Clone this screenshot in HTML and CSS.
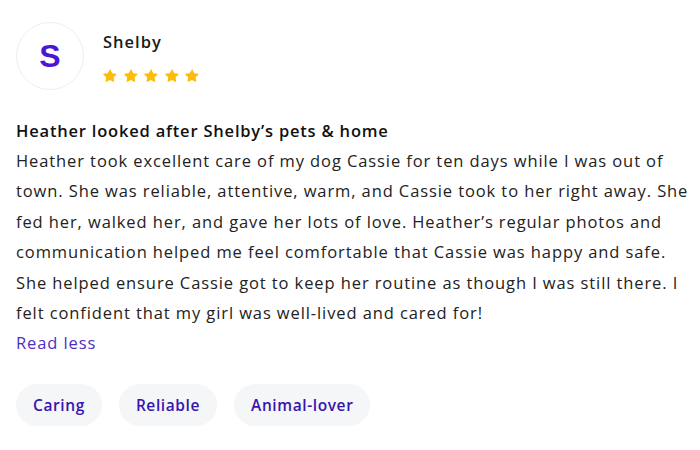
FILE: index.html
```html
<!DOCTYPE html>
<html>
<head>
<meta charset="utf-8">
<link rel="stylesheet" href="styles.css">
</head>
<body>
<div class="review">
  <div class="header">
    <div class="avatar">S</div>
    <div class="who">
      <div class="name">Shelby</div>
      <div class="stars">
        <svg viewBox="0 0 24 24"><path d="M12 2.6l2.7 5.6 6.1.8c.8.1 1.1 1.1.5 1.6l-4.4 4.3 1 6.1c.1.8-.7 1.4-1.4 1l-5.5-2.9-5.5 2.9c-.7.4-1.5-.2-1.4-1l1-6.1-4.4-4.3c-.6-.5-.3-1.5.5-1.6l6.1-.8L10.9 2.6c.3-.7 1.3-.7 1.6 0z"/></svg>
        <svg viewBox="0 0 24 24"><path d="M12 2.6l2.7 5.6 6.1.8c.8.1 1.1 1.1.5 1.6l-4.4 4.3 1 6.1c.1.8-.7 1.4-1.4 1l-5.5-2.9-5.5 2.9c-.7.4-1.5-.2-1.4-1l1-6.1-4.4-4.3c-.6-.5-.3-1.5.5-1.6l6.1-.8L10.9 2.6c.3-.7 1.3-.7 1.6 0z"/></svg>
        <svg viewBox="0 0 24 24"><path d="M12 2.6l2.7 5.6 6.1.8c.8.1 1.1 1.1.5 1.6l-4.4 4.3 1 6.1c.1.8-.7 1.4-1.4 1l-5.5-2.9-5.5 2.9c-.7.4-1.5-.2-1.4-1l1-6.1-4.4-4.3c-.6-.5-.3-1.5.5-1.6l6.1-.8L10.9 2.6c.3-.7 1.3-.7 1.6 0z"/></svg>
        <svg viewBox="0 0 24 24"><path d="M12 2.6l2.7 5.6 6.1.8c.8.1 1.1 1.1.5 1.6l-4.4 4.3 1 6.1c.1.8-.7 1.4-1.4 1l-5.5-2.9-5.5 2.9c-.7.4-1.5-.2-1.4-1l1-6.1-4.4-4.3c-.6-.5-.3-1.5.5-1.6l6.1-.8L10.9 2.6c.3-.7 1.3-.7 1.6 0z"/></svg>
        <svg viewBox="0 0 24 24"><path d="M12 2.6l2.7 5.6 6.1.8c.8.1 1.1 1.1.5 1.6l-4.4 4.3 1 6.1c.1.8-.7 1.4-1.4 1l-5.5-2.9-5.5 2.9c-.7.4-1.5-.2-1.4-1l1-6.1-4.4-4.3c-.6-.5-.3-1.5.5-1.6l6.1-.8L10.9 2.6c.3-.7 1.3-.7 1.6 0z"/></svg>
      </div>
    </div>
  </div>
  <h2 class="title">Heather looked after Shelby’s pets &amp; home</h2>
  <p class="body">Heather took excellent care of my dog Cassie for ten days while I was out of<br>town. She was reliable, attentive, warm, and Cassie took to her right away. She<br>fed her, walked her, and gave her lots of love. Heather’s regular photos and<br>communication helped me feel comfortable that Cassie was happy and safe.<br>She helped ensure Cassie got to keep her routine as though I was still there. I<br>felt confident that my girl was well-lived and cared for!</p>
  <a class="more" href="#">Read less</a>
  <div class="tags">
    <span class="tag">Caring</span>
    <span class="tag">Reliable</span>
    <span class="tag">Animal-lover</span>
  </div>
</div>
</body>
</html>
```
FILE: styles.css
```css
* { box-sizing: border-box; }
html, body { margin: 0; background: #fff; }
body { font-family: "Open Sans", "Noto Sans", sans-serif; color: #1a1a1a; overflow: hidden; }
.review { padding: 22px 16px 0 16px; }
.header { display: flex; align-items: flex-start; gap: 19px; }
.avatar {
  width: 68px; height: 68px; border-radius: 50%;
  border: 1px solid #ededed;
  display: flex; align-items: center; justify-content: center;
  color: #4a17d6; font-family: "Liberation Sans", sans-serif; font-weight: 700; font-size: 32px;
}
.who { padding-top: 8px; }
.name { font-size: 16.5px; font-weight: 600; line-height: 24px; letter-spacing: 1px; }
.stars { display: flex; gap: 5.5px; margin-top: 14px; }
.stars svg { width: 15px; height: 15px; fill: #fcbc0a; }
.title { margin: 29px 0 0; font-size: 16.5px; font-weight: 600; line-height: 24px; letter-spacing: 0.8px; color: #111; }
.body { margin: 3px 0 0; font-size: 16.5px; line-height: 30.4px; letter-spacing: 0.9px; color: #222; white-space: nowrap; }
.more { display: inline-block; margin-top: 3px; font-size: 16.5px; line-height: 24px; color: #4d2fc0; text-decoration: none; letter-spacing: 0.9px; }
.tags { display: flex; gap: 17px; margin-top: 29px; }
.tag {
  height: 42px; padding: 0 17px; border-radius: 21px; background: #f5f6f7;
  display: flex; align-items: center;
  font-size: 15.5px; font-weight: 600; color: #3515b0; letter-spacing: 0.6px;
}
```
